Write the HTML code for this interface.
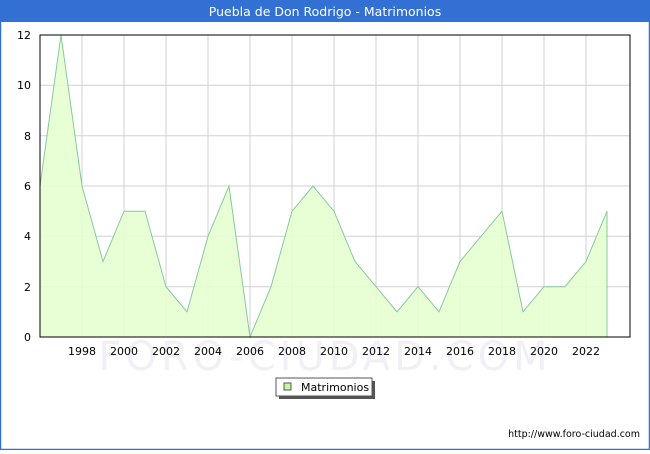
<!DOCTYPE html>
<html><head><style>
body{margin:0;width:650px;height:450px;overflow:hidden;background:#fff;font-family:"DejaVu Sans","Liberation Sans",sans-serif}
</style></head><body>
<svg width="650" height="450" xmlns="http://www.w3.org/2000/svg" font-family="DejaVu Sans, Liberation Sans, sans-serif">
<rect x="0" y="0" width="650" height="450" fill="#fff"/>
<rect x="0.5" y="0.5" width="649" height="449" fill="none" stroke="#3370d4" stroke-width="1.5"/>
<rect x="0" y="0" width="650" height="22" fill="#3370d4"/>
<text x="325" y="16" fill="#fff" font-size="12.5" text-anchor="middle">Puebla de Don Rodrigo - Matrimonios</text>
<g stroke="#d0d0d0" stroke-width="1">
<line x1="40" y1="286.7" x2="630" y2="286.7"/><line x1="40" y1="236.3" x2="630" y2="236.3"/>
<line x1="40" y1="186" x2="630" y2="186"/><line x1="40" y1="135.7" x2="630" y2="135.7"/>
<line x1="40" y1="85.3" x2="630" y2="85.3"/>
<line x1="82" y1="35" x2="82" y2="337"/><line x1="124" y1="35" x2="124" y2="337"/><line x1="166" y1="35" x2="166" y2="337"/><line x1="208" y1="35" x2="208" y2="337"/><line x1="250" y1="35" x2="250" y2="337"/><line x1="292" y1="35" x2="292" y2="337"/><line x1="334" y1="35" x2="334" y2="337"/><line x1="376" y1="35" x2="376" y2="337"/><line x1="418" y1="35" x2="418" y2="337"/><line x1="460" y1="35" x2="460" y2="337"/><line x1="502" y1="35" x2="502" y2="337"/><line x1="544" y1="35" x2="544" y2="337"/><line x1="586" y1="35" x2="586" y2="337"/>
</g>
<text x="325" y="370" font-size="40" fill="#f0f0f6" text-anchor="middle" letter-spacing="4">FORO-CIUDAD.COM</text>
<polygon fill="#e6ffd2" fill-opacity="0.9" stroke="#88c8a0" stroke-width="1" points="40,337 40,186 61,35 82,186 103,261.5 124,211.2 145,211.2 166,286.7 187,311.8 208,236.3 229,186 250,337 271,286.7 292,211.2 313,186 334,211.2 355,261.5 376,286.7 397,311.8 418,286.7 439,311.8 460,261.5 481,236.3 502,211.2 523,311.8 544,286.7 565,286.7 586,261.5 607,211.2 607,337"/>
<rect x="40" y="35" width="590" height="302" fill="none" stroke="#000" stroke-width="1"/>
<g font-size="11" fill="#000" text-anchor="end">
<text x="31" y="341">0</text><text x="31" y="291">2</text><text x="31" y="240">4</text><text x="31" y="190">6</text><text x="31" y="140">8</text><text x="31" y="89">10</text><text x="31" y="39">12</text>
</g>
<g font-size="11" fill="#000" text-anchor="middle">
<text x="82" y="355">1998</text><text x="124" y="355">2000</text><text x="166" y="355">2002</text><text x="208" y="355">2004</text><text x="250" y="355">2006</text><text x="292" y="355">2008</text><text x="334" y="355">2010</text><text x="376" y="355">2012</text><text x="418" y="355">2014</text><text x="460" y="355">2016</text><text x="502" y="355">2018</text><text x="544" y="355">2020</text><text x="586" y="355">2022</text>
</g>
<rect x="279" y="381" width="96" height="18" fill="#555"/>
<rect x="276" y="378" width="96" height="18" fill="#fff" stroke="#555"/>
<rect x="284" y="383" width="7" height="7" fill="#c8f5a0" stroke="#555"/>
<text x="301" y="391" font-size="11">Matrimonios</text>
<text x="640" y="437" font-size="9.5" text-anchor="end">http://www.foro-ciudad.com</text>
</svg>
</body></html>
